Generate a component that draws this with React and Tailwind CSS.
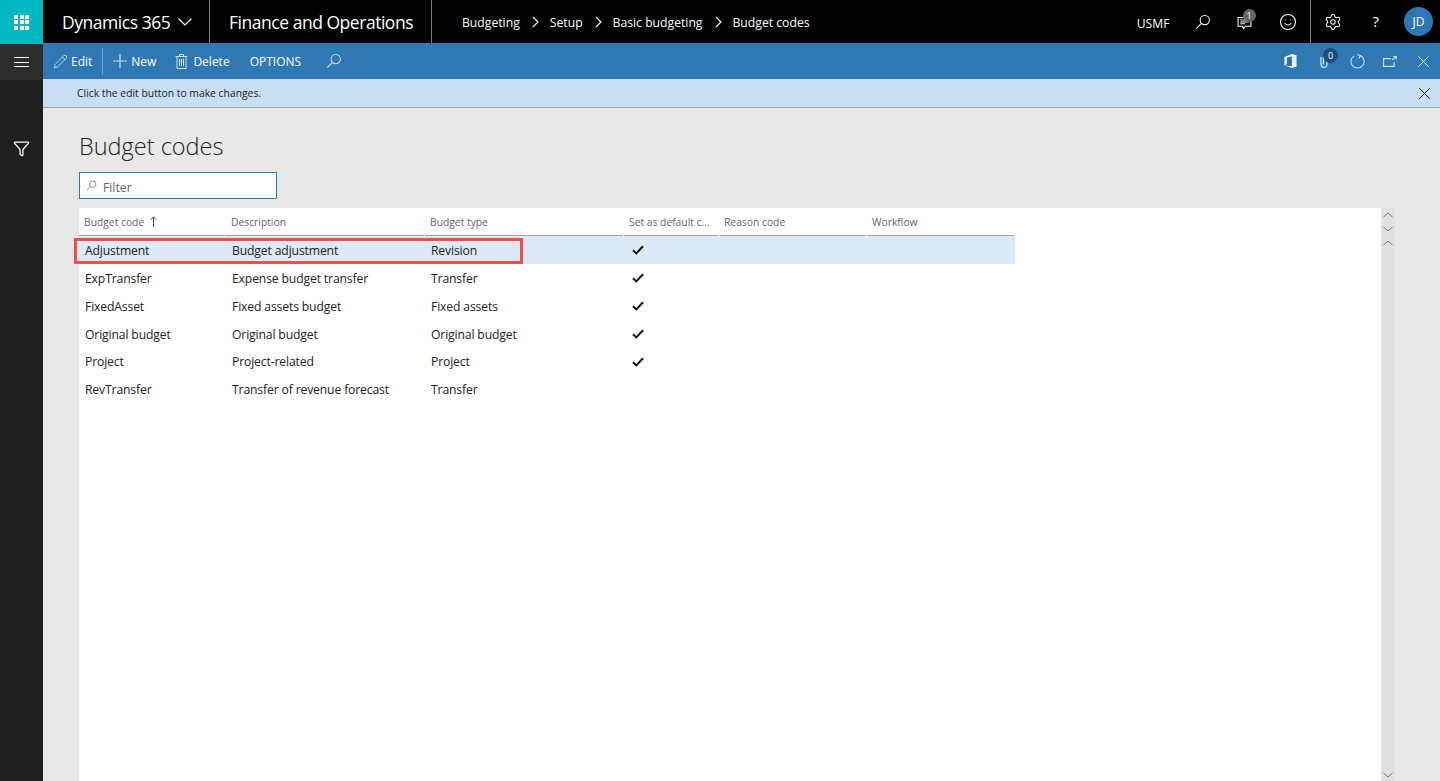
import { Filter, Pencil, Settings, Smile } from 'lucide-react';

const SearchIcon = ({ className }) => (
    <svg className={className} viewBox="0 0 18 18" fill="none" stroke="currentColor" strokeWidth="1.2">
        <circle cx="11" cy="6.8" r="5.2" />
        <path d="M7.2 10.6L1.5 16.5" />
    </svg>
);

const CloseIcon = ({ color }) => (
    <svg className="w-[11px] h-[11px]" viewBox="0 0 11 11" fill="none" stroke={color} strokeWidth="1">
        <path d="M0.3 0.3L10.7 10.7M10.7 0.3L0.3 10.7" />
    </svg>
);

const CheckIcon = () => (
    <svg className="w-[12px] h-[10px] mb-[2px]" viewBox="0 0 12 10" fill="none" stroke="#111" strokeWidth="2">
        <path d="M1 5.2L4.3 8.4L11 1.2" />
    </svg>
);

const ScrollChevron = ({ d }) => (
    <svg className="w-[10px] h-[6px]" viewBox="0 0 10 6" fill="none" stroke="#777" strokeWidth="1">
        <path d={d} />
    </svg>
);

const CrumbChevron = () => (
    <svg className="w-[7px] h-[12px] ml-[12px] mr-[11px]" viewBox="0 0 7 12" fill="none" stroke="white" strokeWidth="1.2">
        <path d="M0.8 0.8L6 6L0.8 11.2" />
    </svg>
);

const WaffleIcon = () => (
    <div className="grid grid-cols-3 gap-[1.5px] w-[15px]">
        {[...Array(9)].map((_, i) => <div key={i} className="h-1 bg-white" />)}
    </div>
);

const TrashIcon = () => (
    <svg className="w-[13px] h-[15px]" viewBox="0 0 13 15" fill="none" stroke="#cfe0ef" strokeWidth="1">
        <path d="M0.5 2.5h12M4.5 2.5v-2h4v2M2 2.5v12h9v-12M4.5 5v7M6.5 5v7M8.5 5v7" />
    </svg>
);

const PlusIcon = () => (
    <svg className="w-[14px] h-[14px]" viewBox="0 0 14 14" fill="none" stroke="#cfe0ef" strokeWidth="1.2">
        <path d="M7 0v14M0 7h14" />
    </svg>
);

const OfficeIcon = () => (
    <svg className="w-[13px] h-[14px]" viewBox="0 0 13 15" fill="#eaf2f9">
        <path d="M0 3.2L8 0l5 1.4v12.2L8 15l-8-2.8 8 1V2.6L2.6 3.8v7L0 12.2z" />
    </svg>
);

const ClipIcon = () => (
    <svg className="w-[8px] h-[14px]" viewBox="0 0 8 14" fill="none" stroke="#c9dcec" strokeWidth="1.3">
        <path d="M1 3v7.5a3 3 0 0 0 6 0V3a1.8 1.8 0 0 0-3.6 0v7.5" />
    </svg>
);

const RefreshIcon = () => (
    <svg className="w-[15px] h-[15px]" viewBox="0 0 16 16" fill="none" stroke="#cfe0ef" strokeWidth="1.1">
        <path d="M10.8 1.6A7 7 0 1 1 4.5 2" />
        <path d="M7.5 0.6L11 1.6L9.6 4.8" />
    </svg>
);

const OpenIcon = () => (
    <svg className="w-[14px] h-[11px]" viewBox="0 0 14 11" fill="none" stroke="#cfe0ef" strokeWidth="1.1">
        <path d="M8 2.6H0.6v7.8h10.6V6M9 4L13 0.8M10.4 0.6h3v3" />
    </svg>
);

const ChatIcon = () => (
    <svg className="w-[15px] h-[14px]" viewBox="0 0 15 15" fill="none" stroke="white" strokeWidth="1.1">
        <path d="M0.6 1.6h13.8v9.4H8.6L6.4 13.6 5.6 11h-5zM3 4.4h9M3 6.4h9M3 8.4h5" />
    </svg>
);

const columns = [
    { label: 'Budget code', width: 'w-[146px]', sorted: true },
    { label: 'Description', width: 'w-[198px]' },
    { label: 'Budget type', width: 'w-[198px]' },
    { label: 'Set as default c...', width: 'w-[94px]' },
    { label: 'Reason code', width: 'w-[147px]' },
    { label: 'Workflow', width: 'w-[147px]' },
];

const rows = [
    { code: 'Adjustment', description: 'Budget adjustment', type: 'Revision', isDefault: true, selected: true },
    { code: 'ExpTransfer', description: 'Expense budget transfer', type: 'Transfer', isDefault: true },
    { code: 'FixedAsset', description: 'Fixed assets budget', type: 'Fixed assets', isDefault: true },
    { code: 'Original budget', description: 'Original budget', type: 'Original budget', isDefault: true },
    { code: 'Project', description: 'Project-related', type: 'Project', isDefault: true },
    { code: 'RevTransfer', description: 'Transfer of revenue forecast', type: 'Transfer', isDefault: false },
];

const TopBar = () => (
    <div className="flex h-[43px] bg-black text-white shrink-0">
        <div className="w-[43px] h-[44px] bg-[#00b7c3] flex items-center justify-center relative z-10">
            <WaffleIcon />
        </div>
        <div className="w-[167px] pl-[19px] flex items-center border-r border-[#777] text-[17.5px] tracking-[-0.45px]">
            <span className="pt-[1px]">Dynamics 365</span>
            <svg className="w-[14px] h-[8px] ml-[8px]" viewBox="0 0 14 8" fill="none" stroke="white" strokeWidth="1.2">
                <path d="M0.6 0.8L7 7L13.4 0.8" />
            </svg>
        </div>
        <div className="w-[222px] pl-[19px] pt-[1px] flex items-center border-r border-[#777] text-[17.5px] tracking-[-0.47px]">
            Finance and Operations
        </div>
        <div className="flex items-center pl-[30px] text-[12.2px]">
            <span className="pt-[3px]">Budgeting</span>
            <CrumbChevron />
            <span className="pt-[3px]">Setup</span>
            <CrumbChevron />
            <span className="pt-[3px]">Basic budgeting</span>
            <CrumbChevron />
            <span className="pt-[3px]">Budget codes</span>
        </div>
        <div className="ml-auto flex items-center h-full">
            <span className="text-[12.2px] pt-[5px] mr-[25px]">USMF</span>
            <SearchIcon className="w-[16px] h-[16px] mr-[26px]" />
            <div className="relative mr-[27px] mt-[3px]">
                <ChatIcon />
                <span className="absolute -top-[7px] -right-[4px] w-[13px] h-[13px] rounded-full bg-[#666] text-[9px] leading-[13px] text-center">1</span>
            </div>
            <Smile size={18} strokeWidth={1.5} className="mr-[13px]" />
            <div className="w-px h-full bg-[#777] mr-[13px]" />
            <Settings size={18} strokeWidth={1.4} className="mr-[31px]" />
            <span className="text-[15px] mr-[25px]">?</span>
            <div className="w-[29px] h-[29px] rounded-full bg-[#2e78b3] flex items-center justify-center text-[12px] mr-[7px]">JD</div>
        </div>
    </div>
);

const CommandBar = () => (
    <div className="flex items-center h-[36px] bg-[#2e78b3] text-white text-[12px] shrink-0">
        <Pencil size={15} strokeWidth={1.3} color="#dbe8f3" className="ml-[10px] mr-[3px]" />
        <span className="pt-[1px]">Edit</span>
        <div className="w-px h-[27px] bg-[#6fa3cc] ml-[10px] mr-[10px]" />
        <PlusIcon />
        <span className="pt-[1px] ml-[4px]">New</span>
        <div className="ml-[19px] mr-[5px]"><TrashIcon /></div>
        <span className="pt-[1px]">Delete</span>
        <span className="pt-[2px] ml-[20px]">OPTIONS</span>
        <SearchIcon className="w-[16px] h-[16px] ml-[25px] text-[#cfe0ef]" />
        <div className="ml-auto flex items-center">
            <OfficeIcon />
            <div className="relative flex ml-[23px] mr-[22px]">
                <ClipIcon />
                <span className="absolute -top-[6px] left-[3px] w-[15px] h-[15px] rounded-full bg-[#1f4e79] text-[9px] leading-[15px] text-center">0</span>
            </div>
            <RefreshIcon />
            <div className="flex ml-[18px] mr-[21px]"><OpenIcon /></div>
            <div className="flex mr-[11px]"><CloseIcon color="#cfe0ef" /></div>
        </div>
    </div>
);

const Grid = () => (
    <div className="flex flex-1 min-h-0">
        <div className="flex-1 bg-white">
            <div className="flex h-[28px] w-[936px]">
                {columns.map(col => (
                    <div key={col.label} className={`${col.width} shrink-0 pl-[5px] pt-[3px] mr-px flex items-center gap-[6px] border-b border-[#a6a6a6] text-[10.3px] text-[#666]`}>
                        <span>{col.label}</span>
                        {col.sorted && (
                            <svg className="w-[7px] h-[11px] mb-[3px]" viewBox="0 0 7 11" fill="none" stroke="#555" strokeWidth="1">
                                <path d="M3.5 11V1M0.8 3.6L3.5 0.8l2.7 2.8" />
                            </svg>
                        )}
                    </div>
                ))}
            </div>
            {rows.map(row => (
                <div key={row.code} className={`flex h-[27.8px] w-[936px] items-center pt-[3px] text-[12.2px] tracking-[-0.15px] text-[#222] ${row.selected ? 'bg-[#dce9f7]' : ''}`}>
                    <div className="w-[147px] pl-[6px]">{row.code}</div>
                    <div className="w-[199px] pl-[6px]">{row.description}</div>
                    <div className="w-[199px] pl-[6px]">{row.type}</div>
                    <div className="pl-[8px] flex">
                        {row.isDefault && <CheckIcon />}
                    </div>
                </div>
            ))}
        </div>
        <div className="w-[14px] bg-[#e0e0e0] flex flex-col items-center">
            <div className="flex flex-col gap-[8px] mt-[4px]">
                <ScrollChevron d="M0.5 5L5 1L9.5 5" />
                <ScrollChevron d="M0.5 1L5 5L9.5 1" />
                <ScrollChevron d="M0.5 5L5 1L9.5 5" />
            </div>
            <div className="mt-auto mb-[3px] flex">
                <ScrollChevron d="M0.5 1L5 5L9.5 1" />
            </div>
        </div>
    </div>
);

export default function App() {
    return (
        <div className="relative flex flex-col h-[781px] w-[1440px] overflow-hidden bg-[#e8e8e8] font-['Open_Sans','Noto_Sans',sans-serif]">
            <TopBar />
            <div className="flex flex-1 min-h-0">
                <div className="w-[43px] bg-[#202020] shrink-0 text-white">
                    <div className="h-[36px] mt-px bg-[#2d2d2d] flex items-center justify-center">
                        <div className="w-[15px] h-[10px] border-y border-white flex items-center">
                            <div className="w-full h-px bg-white" />
                        </div>
                    </div>
                    <div className="flex justify-center mt-[60px]">
                        <Filter size={17} strokeWidth={1.8} />
                    </div>
                </div>
                <div className="flex-1 flex flex-col min-w-0">
                    <CommandBar />
                    <div className="flex items-center justify-between h-[29px] bg-[#c7def3] border-b border-[#a8a8a8] pl-[34px] pr-[10px] text-[10.35px] text-[#222] shrink-0">
                        <span className="pt-[2px]">Click the edit button to make changes.</span>
                        <CloseIcon color="#222" />
                    </div>
                    <div className="flex-1 flex flex-col min-h-0 pl-[36px] pr-[45px]">
                        <h1 className="text-[23.5px] leading-[32px] mt-[22px] text-[#222] font-light">Budget codes</h1>
                        <div className="flex items-center gap-[6px] w-[198px] h-[27px] mt-[10px] mb-[9px] pl-[6px] bg-white border border-[#2e78b3] text-[12.2px] text-[#666]">
                            <SearchIcon className="w-[11px] h-[11px] text-[#666]" />
                            <span className="pt-[5px]">Filter</span>
                        </div>
                        <Grid />
                    </div>
                </div>
            </div>
            <div className="absolute left-[74px] top-[238px] w-[449px] h-[26px] border-[3px] border-[#ef4f4a]" />
        </div>
    );
}
